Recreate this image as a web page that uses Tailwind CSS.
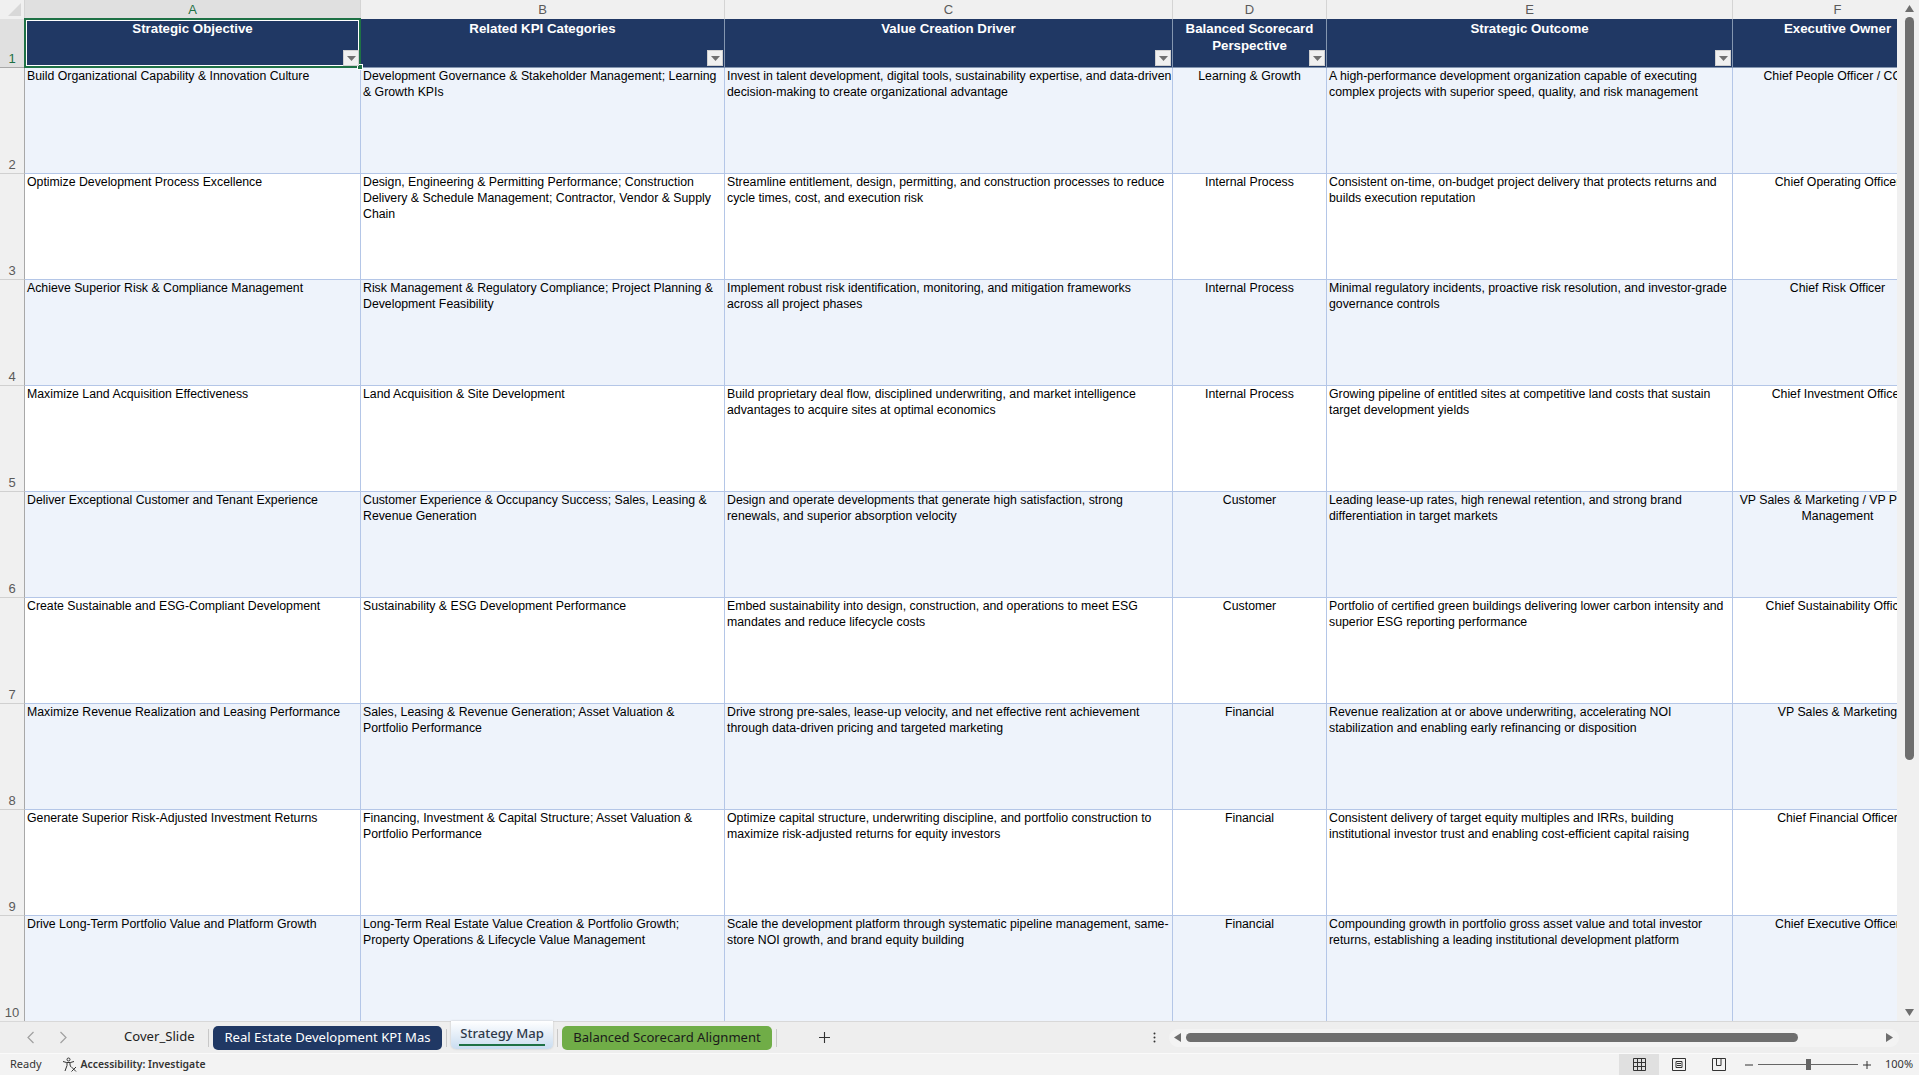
<!DOCTYPE html>
<html lang="en">
<head>
    <meta charset="UTF-8">
    <title>Strategy Map</title>
    <script src="https://cdn.jsdelivr.net/npm/@tailwindcss/browser@4"></script>
</head>
<body class="w-[1919px] h-[1075px] overflow-hidden bg-[#f0f0f0] font-['Liberation_Sans',sans-serif]">
    <!-- Sheet area -->
    <div class="flex h-[1021px]">
        <div class="w-[1897px] h-[1021px] overflow-hidden">
            <table class="block w-[2143px] text-[12.3px] leading-[16px] text-black
                [&_thead]:block [&_tbody]:block [&_tr]:grid [&_tr]:grid-cols-[25px_336px_364px_448px_154px_406px_210px]
                [&_td]:px-[2px] [&_td]:border-r [&_td]:border-b [&_td]:border-[#b4c6e7] [&_td]:whitespace-nowrap
                [&_tbody_tr]:h-[106px] [&_tbody_tr:nth-child(odd)]:bg-[#eef3fb] [&_tbody_tr:nth-child(even)]:bg-white
                [&_tbody_th]:flex [&_tbody_th]:items-end [&_tbody_th]:justify-center [&_tbody_th]:bg-[#f0f0f0] [&_tbody_th]:font-normal [&_tbody_th]:text-[13px] [&_tbody_th]:leading-[17px] [&_tbody_th]:text-[#5a5a5a] [&_tbody_th]:border-r [&_tbody_th]:border-b [&_tbody_th]:border-r-[#a8a8a8] [&_tbody_th]:border-b-[#d0d0d0]">
                <thead class="[&_.col]:h-[19px] [&_.col]:bg-[#f0f0f0] [&_.col]:font-normal [&_.col]:text-[13px] [&_.col]:leading-[20px] [&_.col]:text-[#5a5a5a] [&_.col]:border-r [&_.col]:border-[#d4d4d4] [&_.hd]:relative [&_.hd]:h-[49px] [&_.hd]:bg-[#203864] [&_.hd]:text-white [&_.hd]:text-[13.3px] [&_.hd]:leading-[17px] [&_.hd]:font-bold [&_.hd]:border-r [&_.hd]:border-b [&_.hd]:border-[#8496b0] [&_.hd]:pt-px">
                    <tr>
                        <th class="col relative overflow-hidden">
                            <svg class="absolute right-[3px] bottom-[3px]" width="13" height="13" viewBox="0 0 13 13"><path d="M13 0V13H0Z" fill="#d8d8d8"/></svg>
                        </th>
                        <th class="col !bg-[#e0e0e0] !text-[#1e7145]">A</th>
                        <th class="col">B</th>
                        <th class="col">C</th>
                        <th class="col">D</th>
                        <th class="col">E</th>
                        <th class="col">F</th>
                    </tr>
                    <tr>
                        <th class="flex items-end justify-center h-[49px] bg-[#e0e0e0] font-normal text-[13px] leading-[17px] text-[#1e7145] border-r border-b border-r-[#1e7145] border-b-[#a8a8a8]">1</th>
                        <th class="hd">Strategic Objective
                            <span class="absolute z-10 -top-[1px] -left-px -right-px -bottom-[1px] border-2 border-[#1e7145] outline outline-1 -outline-offset-3 outline-white"></span>
                            <span class="absolute z-20 -right-[3px] -bottom-[3px] w-[6px] h-[6px] bg-[#1e7145] border border-white"></span>
                            <span class="absolute z-20 right-[1px] bottom-[1px] w-[16px] h-[16px] bg-[#f0f0f0] border border-[#d0d0d0] flex items-center justify-center"><svg width="9" height="5" viewBox="0 0 9 5"><path d="M0 0H9L4.500 5Z" fill="#707070"/></svg></span>
                        </th>
                        <th class="hd">Related KPI Categories
                            <span class="absolute right-[1px] bottom-[1px] w-[16px] h-[16px] bg-[#f0f0f0] border border-[#d0d0d0] flex items-center justify-center"><svg width="9" height="5" viewBox="0 0 9 5"><path d="M0 0H9L4.500 5Z" fill="#707070"/></svg></span>
                        </th>
                        <th class="hd">Value Creation Driver
                            <span class="absolute right-[1px] bottom-[1px] w-[16px] h-[16px] bg-[#f0f0f0] border border-[#d0d0d0] flex items-center justify-center"><svg width="9" height="5" viewBox="0 0 9 5"><path d="M0 0H9L4.500 5Z" fill="#707070"/></svg></span>
                        </th>
                        <th class="hd">Balanced Scorecard<br>Perspective
                            <span class="absolute right-[1px] bottom-[1px] w-[16px] h-[16px] bg-[#f0f0f0] border border-[#d0d0d0] flex items-center justify-center"><svg width="9" height="5" viewBox="0 0 9 5"><path d="M0 0H9L4.500 5Z" fill="#707070"/></svg></span>
                        </th>
                        <th class="hd">Strategic Outcome
                            <span class="absolute right-[1px] bottom-[1px] w-[16px] h-[16px] bg-[#f0f0f0] border border-[#d0d0d0] flex items-center justify-center"><svg width="9" height="5" viewBox="0 0 9 5"><path d="M0 0H9L4.500 5Z" fill="#707070"/></svg></span>
                        </th>
                        <th class="hd">Executive Owner</th>
                    </tr>
                </thead>
                <tbody>
                    <tr>
                        <th>2</th>
                        <td>Build Organizational Capability &amp; Innovation Culture</td>
                        <td>Development Governance &amp; Stakeholder Management; Learning<br>&amp; Growth KPIs</td>
                        <td>Invest in talent development, digital tools, sustainability expertise, and data-driven<br>decision-making to create organizational advantage</td>
                        <td class="text-center">Learning &amp; Growth</td>
                        <td>A high-performance development organization capable of executing<br>complex projects with superior speed, quality, and risk management</td>
                        <td class="text-center">Chief People Officer / COO</td>
                    </tr>
                    <tr>
                        <th>3</th>
                        <td>Optimize Development Process Excellence</td>
                        <td>Design, Engineering &amp; Permitting Performance; Construction<br>Delivery &amp; Schedule Management; Contractor, Vendor &amp; Supply<br>Chain</td>
                        <td>Streamline entitlement, design, permitting, and construction processes to reduce<br>cycle times, cost, and execution risk</td>
                        <td class="text-center">Internal Process</td>
                        <td>Consistent on-time, on-budget project delivery that protects returns and<br>builds execution reputation</td>
                        <td class="text-center">Chief Operating Officer</td>
                    </tr>
                    <tr>
                        <th>4</th>
                        <td>Achieve Superior Risk &amp; Compliance Management</td>
                        <td>Risk Management &amp; Regulatory Compliance; Project Planning &amp;<br>Development Feasibility</td>
                        <td>Implement robust risk identification, monitoring, and mitigation frameworks<br>across all project phases</td>
                        <td class="text-center">Internal Process</td>
                        <td>Minimal regulatory incidents, proactive risk resolution, and investor-grade<br>governance controls</td>
                        <td class="text-center">Chief Risk Officer</td>
                    </tr>
                    <tr>
                        <th>5</th>
                        <td>Maximize Land Acquisition Effectiveness</td>
                        <td>Land Acquisition &amp; Site Development</td>
                        <td>Build proprietary deal flow, disciplined underwriting, and market intelligence<br>advantages to acquire sites at optimal economics</td>
                        <td class="text-center">Internal Process</td>
                        <td>Growing pipeline of entitled sites at competitive land costs that sustain<br>target development yields</td>
                        <td class="text-center">Chief Investment Officer</td>
                    </tr>
                    <tr>
                        <th>6</th>
                        <td>Deliver Exceptional Customer and Tenant Experience</td>
                        <td>Customer Experience &amp; Occupancy Success; Sales, Leasing &amp;<br>Revenue Generation</td>
                        <td>Design and operate developments that generate high satisfaction, strong<br>renewals, and superior absorption velocity</td>
                        <td class="text-center">Customer</td>
                        <td>Leading lease-up rates, high renewal retention, and strong brand<br>differentiation in target markets</td>
                        <td class="text-center">VP Sales &amp; Marketing / VP Property<br>Management</td>
                    </tr>
                    <tr>
                        <th>7</th>
                        <td>Create Sustainable and ESG-Compliant Development</td>
                        <td>Sustainability &amp; ESG Development Performance</td>
                        <td>Embed sustainability into design, construction, and operations to meet ESG<br>mandates and reduce lifecycle costs</td>
                        <td class="text-center">Customer</td>
                        <td>Portfolio of certified green buildings delivering lower carbon intensity and<br>superior ESG reporting performance</td>
                        <td class="text-center">Chief Sustainability Officer</td>
                    </tr>
                    <tr>
                        <th>8</th>
                        <td>Maximize Revenue Realization and Leasing Performance</td>
                        <td>Sales, Leasing &amp; Revenue Generation; Asset Valuation &amp;<br>Portfolio Performance</td>
                        <td>Drive strong pre-sales, lease-up velocity, and net effective rent achievement<br>through data-driven pricing and targeted marketing</td>
                        <td class="text-center">Financial</td>
                        <td>Revenue realization at or above underwriting, accelerating NOI<br>stabilization and enabling early refinancing or disposition</td>
                        <td class="text-center">VP Sales &amp; Marketing</td>
                    </tr>
                    <tr>
                        <th>9</th>
                        <td>Generate Superior Risk-Adjusted Investment Returns</td>
                        <td>Financing, Investment &amp; Capital Structure; Asset Valuation &amp;<br>Portfolio Performance</td>
                        <td>Optimize capital structure, underwriting discipline, and portfolio construction to<br>maximize risk-adjusted returns for equity investors</td>
                        <td class="text-center">Financial</td>
                        <td>Consistent delivery of target equity multiples and IRRs, building<br>institutional investor trust and enabling cost-efficient capital raising</td>
                        <td class="text-center">Chief Financial Officer</td>
                    </tr>
                    <tr>
                        <th>10</th>
                        <td>Drive Long-Term Portfolio Value and Platform Growth</td>
                        <td>Long-Term Real Estate Value Creation &amp; Portfolio Growth;<br>Property Operations &amp; Lifecycle Value Management</td>
                        <td>Scale the development platform through systematic pipeline management, same-<br>store NOI growth, and brand equity building</td>
                        <td class="text-center">Financial</td>
                        <td>Compounding growth in portfolio gross asset value and total investor<br>returns, establishing a leading institutional development platform</td>
                        <td class="text-center">Chief Executive Officer</td>
                    </tr>
                </tbody>
            </table>
        </div>

        <!-- Vertical scrollbar -->
        <div class="w-[22px] h-[1021px] flex flex-col items-center pl-[3px]">
            <svg class="mt-[5px] shrink-0" width="9" height="7" viewBox="0 0 9 7"><path d="M4.500 0L9 7H0Z" fill="#6e6e6e"/></svg>
            <div class="mt-[5px] w-[9px] h-[743px] rounded-full bg-[#6e6e6e]"></div>
            <svg class="mt-auto mb-[5px] shrink-0" width="9" height="7" viewBox="0 0 9 7"><path d="M0 0H9L4.500 7Z" fill="#6e6e6e"/></svg>
        </div>
    </div>

    <!-- Sheet tabs -->
    <div class="relative flex items-center h-[32px] bg-[#eeeeee] border-t border-[#d8d8d8] font-['Noto_Sans',sans-serif] text-[13.100px] text-[#222]">
        <svg class="ml-[26px]" width="9" height="13" viewBox="0 0 9 13"><path d="M7.500 1L2 6.500L7.500 12" fill="none" stroke="#a0a0a0" stroke-width="1.200"/></svg>
        <svg class="ml-[24px]" width="9" height="13" viewBox="0 0 9 13"><path d="M1.500 1L7 6.500L1.500 12" fill="none" stroke="#a0a0a0" stroke-width="1.200"/></svg>
        <span class="ml-[56px] w-[71px] -mt-[2px]">Cover_Slide</span>
        <span class="ml-[13px] w-px h-[18px] bg-[#c8c8c8]"></span>
        <span class="ml-[4px] w-[229px] h-[24px] rounded-[5px] bg-[#203864] text-white text-center leading-[22px]">Real Estate Development KPI Mas</span>
        <span class="ml-[4px] w-px h-[18px] bg-[#c8c8c8]"></span>
        <span class="ml-[4px] self-start -mt-px w-[102px] h-[28px] rounded-b-[5px] bg-gradient-to-b from-white to-[#c9dcf0] text-center font-medium text-[#2f3a4a] leading-[25px] relative shadow-[0_0_2px_#bbb]">Strategy Map
            <span class="absolute left-[8px] right-[8px] bottom-[3px] h-[2px] bg-[#1e7145]"></span>
        </span>
        <span class="ml-[4px] w-px h-[18px] bg-[#c8c8c8]"></span>
        <span class="ml-[4px] w-[210px] h-[24px] rounded-[5px] bg-[#70ad47] text-[#1b1b1b] text-center leading-[22px]">Balanced Scorecard Alignment</span>
        <span class="ml-[4px] w-px h-[18px] bg-[#c8c8c8]"></span>
        <svg class="ml-[41px]" width="13" height="13" viewBox="0 0 13 13"><path d="M6.500 1V12M1 6.500H12" stroke="#333" stroke-width="1.100"/></svg>
        <!-- dots -->
        <svg class="ml-[322px]" width="3" height="13" viewBox="0 0 3 13"><circle cx="1.500" cy="2.500" r="1" fill="#333"/><circle cx="1.500" cy="6.500" r="1" fill="#333"/><circle cx="1.500" cy="10.500" r="1" fill="#333"/></svg>
        <!-- horizontal scrollbar -->
        <div class="ml-[13px] w-[730px] h-[18px] rounded-[9px] bg-[#f3f3f3] flex items-center pl-[5px] pr-[6px]">
            <svg width="7" height="9" viewBox="0 0 7 9"><path d="M7 0V9L0 4.500Z" fill="#6e6e6e"/></svg>
            <div class="ml-[5px] w-[612px] h-[9px] rounded-full bg-[#6e6e6e]"></div>
            <svg class="ml-auto" width="7" height="9" viewBox="0 0 7 9"><path d="M0 0V9L7 4.500Z" fill="#6e6e6e"/></svg>
        </div>
    </div>

    <!-- Status bar -->
    <div class="flex items-center h-[22px] bg-[#f3f3f3] border-t border-[#fafafa] font-['Noto_Sans',sans-serif] text-[11px] text-[#333]">
        <span class="ml-[10px]">Ready</span>
        <svg class="ml-[20px]" width="15" height="15" viewBox="0 0 15 15" fill="none" stroke="#333" stroke-width="1"><circle cx="6.500" cy="2.500" r="1.500"/><path d="M1 4.500L4.500 5.500H8.500L12 4.500M5 5.500L5 8.500L3 14M8 5.500V8L9 10"/><path d="M9.500 10L14 14.500M14 10L9.500 14.500"/></svg>
        <span class="ml-[4px] font-semibold text-[10.400px] text-[#333]">Accessibility: Investigate</span>
        <div class="ml-auto flex items-center h-full">
            <span class="w-[40px] h-full bg-[#e0e0e0] flex items-center justify-center">
                <svg width="13" height="13" viewBox="0 0 13 13" fill="none" stroke="#333"><path d="M.5.500H12.500V12.500H.5ZM4.500.5V12.500M8.500.5V12.500M.5 4.500H12.500M.5 8.500H12.500"/></svg>
            </span>
            <span class="w-[40px] flex items-center justify-center">
                <svg width="14" height="13" viewBox="0 0 14 13" fill="none" stroke="#333"><path d="M.5.500H13.500V12.500H.5ZM4 3.500H10V9.500H4ZM5 5.500H9M5 7.500H9"/></svg>
            </span>
            <span class="w-[40px] flex items-center justify-center">
                <svg width="14" height="13" viewBox="0 0 14 13" fill="none" stroke="#333"><path d="M.5.500H13.500V12.500H.5ZM4.500.5V7.500H9V.5"/></svg>
            </span>
            <svg class="ml-[6px]" width="8" height="8" viewBox="0 0 8 8"><path d="M0 4H8" stroke="#333"/></svg>
            <span class="ml-[5px] relative w-[100px] h-px bg-[#666]">
                <span class="absolute left-[48px] -top-[5px] w-[5px] h-[11px] bg-[#666]"></span>
            </span>
            <svg class="ml-[5px]" width="8" height="8" viewBox="0 0 8 8"><path d="M0 4H8M4 0V8" stroke="#333"/></svg>
            <span class="ml-[14px] mr-[8px] w-[26px]">100%</span>
        </div>
    </div>
</body>
</html>
